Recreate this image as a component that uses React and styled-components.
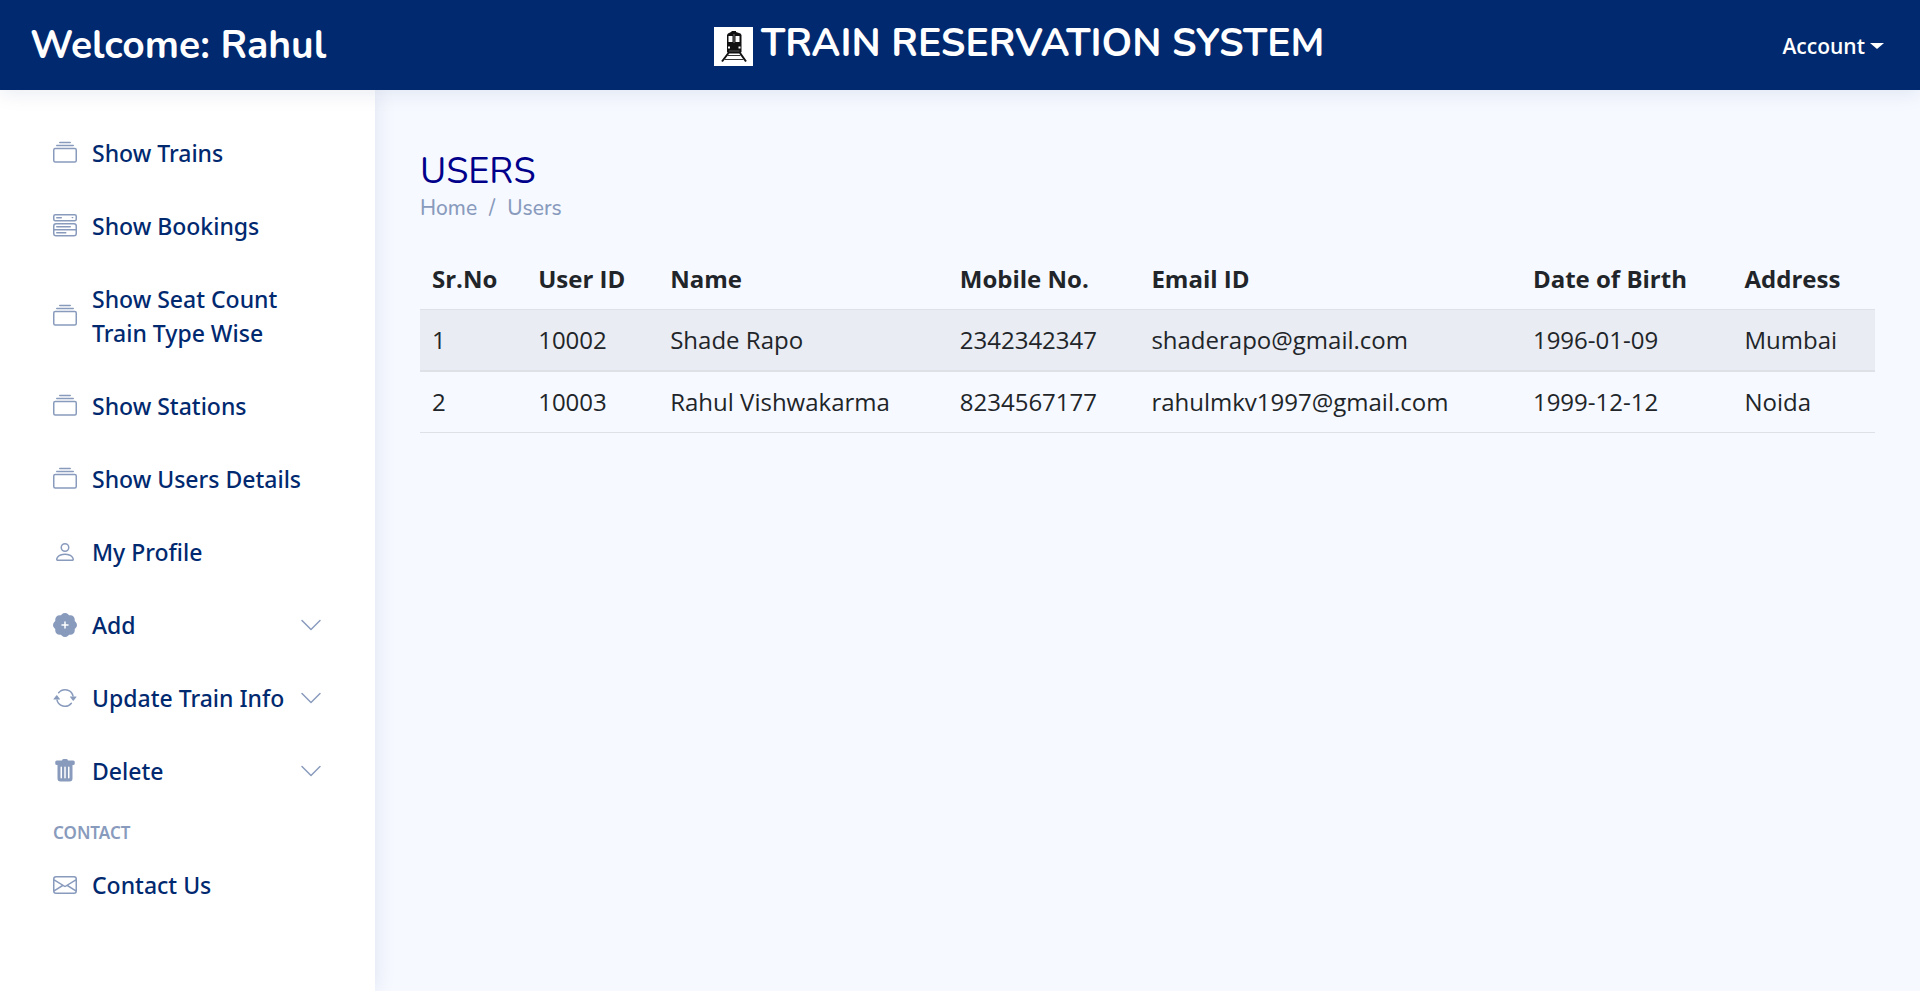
import React from "react";
import styled, { createGlobalStyle } from "styled-components";
import {
  BsArrowRepeat,
  BsChevronDown,
  BsCollection,
  BsEnvelope,
  BsMenuButtonWide,
  BsPatchPlusFill,
  BsPerson,
  BsTrashFill,
} from "react-icons/bs";

const GlobalStyle = createGlobalStyle`
  *, *::before, *::after { box-sizing: border-box; }
  body {
    margin: 0;
    background: #f6f9ff;
    color: #212529;
    font-family: "Open Sans", "Noto Sans", sans-serif;
  }
  a { text-decoration: none; }
`;

const Page = styled.div`
  display: flex;
  flex-direction: column;
  min-height: 100vh;
`;

const Header = styled.header`
  position: relative;
  z-index: 2;
  display: grid;
  grid-template-columns: minmax(0, 11fr) auto minmax(0, 9fr);
  align-items: center;
  min-height: 90px;
  padding: 2px 36px 0 30px;
  background: #012970;
  box-shadow: 0 2px 20px rgba(1, 41, 112, 0.1);
  color: #fff;
`;

const headingFont = `"Nunito", "Lato", sans-serif`;

const Welcome = styled.span`
  font: 700 39px/44px ${headingFont};
  white-space: nowrap;
`;

const SiteTitle = styled.h1`
  display: flex;
  align-items: flex-end;
  gap: 8px;
  margin: 0;
  padding-bottom: 4px;
  font: 700 39px/44px ${headingFont};
  white-space: nowrap;

  svg { flex: none; }
`;

const AccountButton = styled.button`
  display: flex;
  align-items: center;
  justify-self: end;
  gap: 5px;
  padding: 0;
  border: 0;
  background: none;
  color: inherit;
  font: 600 21px/32px "Open Sans", sans-serif;
  cursor: pointer;

  &::after {
    content: "";
    border-top: 6px solid;
    border-right: 7px solid transparent;
    border-left: 7px solid transparent;
  }
`;

const Body = styled.div`
  display: flex;
  flex: 1;
`;

const Sidebar = styled.aside`
  position: relative;
  z-index: 1;
  flex: 0 0 375px;
  padding: 31px 30px 30px;
  background: #fff;
  box-shadow: 0 0 20px rgba(1, 41, 112, 0.1);
`;

const NavList = styled.ul`
  display: flex;
  flex-direction: column;
  gap: 9px;
  margin: 0;
  padding: 0;
  list-style: none;
`;

const NavLink = styled.a`
  display: flex;
  align-items: center;
  gap: 15px;
  padding: 15px 22px 15px 23px;
  color: #012970;
  font: 500 23px/34px "Noto Sans", "Open Sans", sans-serif;

  svg {
    flex: none;
    width: 24px;
    height: 24px;
    color: #899bbd;
  }
`;

const NavLabel = styled.span`
  flex: 1;
  margin-right: ${(p) => (p.$expandable ? "-15px" : "0")};
  white-space: ${(p) => (p.$expandable ? "nowrap" : "normal")};
`;

const NavHeading = styled.h2`
  margin: 17px 0 8px 23px;
  color: #899bbd;
  font: 600 17px/25px "Noto Sans", "Open Sans", sans-serif;
  text-transform: uppercase;
`;

const Main = styled.main`
  flex: 1;
  min-width: 0;
  padding: 61px 45px 30px;
`;

const PageTitle = styled.h2`
  margin: 0;
  color: #00008b;
  font: 400 36px/42px ${headingFont};
`;

const Breadcrumb = styled.ol`
  display: flex;
  margin: 0 0 25px;
  padding: 0;
  color: #899bbd;
  font: 500 21px/31px ${headingFont};
  list-style: none;

  li + li::before {
    content: "/";
    padding: 0 12px;
  }

  a { color: inherit; }
`;

const Table = styled.table`
  width: 100%;
  border-collapse: separate;
  border-spacing: 0;
  font-size: 24px;
  line-height: 36px;
`;

const HeadCell = styled.th`
  padding: 12px;
  border-bottom: 1px solid #dee2e6;
  font-weight: 700;
  text-align: left;
`;

const Row = styled.tr`
  &:nth-child(odd) { background: #e9ecf2; }
  &:not(:last-child) td { border-bottom-width: 2px; }
`;

const Cell = styled.td`
  padding: 12px;
  border-bottom: 1px solid #dee2e6;
`;

function TrainLogo() {
  return (
    <svg width="39" height="39" viewBox="0 0 39 39" aria-hidden="true">
      <rect width="39" height="39" fill="#fff" />
      <path d="M18 4h4v1l4.500 1.500 1 1.500v17l-1.500 1.500H14.500L13 25V8l1-1.500L17 5z" fill="#111" />
      <path d="M14.500 9h4v6h-4zM21.500 9h4v6h-4z" fill="#fff" />
      <path d="M20 7v9" stroke="#777" />
      <path d="M14 19.500h2v2h-2zM24.500 19.500h2v2h-2z" fill="#fff" />
      <path d="M15 24h10.500" stroke="#555" />
      <path d="M14.500 26 8 34.500M26 26l6 8.500" stroke="#111" strokeWidth="2" />
      <path d="M13.500 28.500h13M10.500 32.500h19" stroke="#333" />
    </svg>
  );
}

const links = [
  { label: "Show Trains", Icon: BsCollection },
  { label: "Show Bookings", Icon: BsMenuButtonWide },
  { label: "Show Seat Count Train Type Wise", Icon: BsCollection },
  { label: "Show Stations", Icon: BsCollection },
  { label: "Show Users Details", Icon: BsCollection },
  { label: "My Profile", Icon: BsPerson },
  { label: "Add", Icon: BsPatchPlusFill, expandable: true },
  { label: "Update Train Info", Icon: BsArrowRepeat, expandable: true },
  { label: "Delete", Icon: BsTrashFill, expandable: true },
];

const columns = ["Sr.No", "User ID", "Name", "Mobile No.", "Email ID", "Date of Birth", "Address"];

const users = [
  ["1", "10002", "Shade Rapo", "2342342347", "shaderapo@gmail.com", "1996-01-09", "Mumbai"],
  ["2", "10003", "Rahul Vishwakarma", "8234567177", "rahulmkv1997@gmail.com", "1999-12-12", "Noida"],
];

function NavItem({ label, Icon, expandable }) {
  return (
    <li>
      <NavLink href="#">
        <Icon aria-hidden="true" />
        <NavLabel $expandable={expandable}>{label}</NavLabel>
        {expandable && <BsChevronDown aria-hidden="true" />}
      </NavLink>
    </li>
  );
}

export default function App() {
  return (
    <Page>
      <GlobalStyle />
      <Header>
        <Welcome>Welcome: Rahul</Welcome>
        <SiteTitle>
          <TrainLogo />
          TRAIN RESERVATION SYSTEM
        </SiteTitle>
        <AccountButton type="button">Account</AccountButton>
      </Header>
      <Body>
        <Sidebar>
          <nav>
            <NavList>
              {links.map((link) => (
                <NavItem key={link.label} {...link} />
              ))}
            </NavList>
            <NavHeading>Contact</NavHeading>
            <NavList>
              <NavItem label="Contact Us" Icon={BsEnvelope} />
            </NavList>
          </nav>
        </Sidebar>
        <Main>
          <PageTitle>USERS</PageTitle>
          <nav aria-label="Breadcrumb">
            <Breadcrumb>
              <li><a href="#">Home</a></li>
              <li>Users</li>
            </Breadcrumb>
          </nav>
          <Table>
            <thead>
              <tr>
                {columns.map((c) => (
                  <HeadCell key={c} scope="col">{c}</HeadCell>
                ))}
              </tr>
            </thead>
            <tbody>
              {users.map((user) => (
                <Row key={user[0]}>
                  {user.map((value) => (
                    <Cell key={value}>{value}</Cell>
                  ))}
                </Row>
              ))}
            </tbody>
          </Table>
        </Main>
      </Body>
    </Page>
  );
}
